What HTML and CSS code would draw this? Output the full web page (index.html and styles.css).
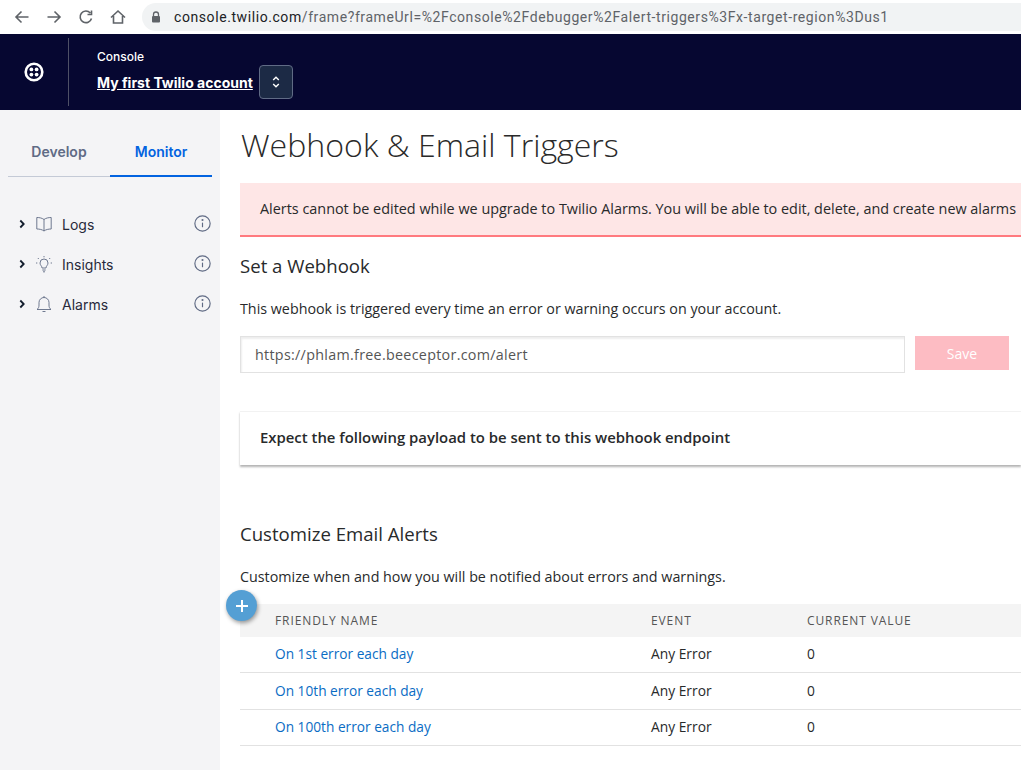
FILE: index.html
```html
<!DOCTYPE html>
<html lang="en">

<head>
    <meta charset="UTF-8">
    <meta name="viewport" content="width=device-width, initial-scale=1.0">
    <title>Webhook &amp; Email Triggers</title>
    <link rel="stylesheet" href="styles.css">
</head>

<body>
    <div class="browser-bar">
        <svg class="nav-icon" viewBox="0 0 16 16"><path d="M14.5 8H2M7.5 2.5 2 8l5.5 5.5" /></svg>
        <svg class="nav-icon" viewBox="0 0 16 16"><path d="M1.5 8H14M8.5 2.5 14 8l-5.500 5.500" /></svg>
        <svg class="nav-icon" viewBox="0 0 16 16"><path d="M13.500 9.500A5.800 5.800 0 1 1 12.300 4M13.500 1.500v4h-4" /></svg>
        <svg class="nav-icon" viewBox="0 0 16 16"><path d="M1 8.500 8 2l7 6.500M3.500 7v7h9V7" /></svg>
        <div class="url-box">
            <svg class="lock" viewBox="0 0 10 12"><path d="M2.500 5V3.500a2.500 2.500 0 0 1 5 0V5" fill="none" stroke="#5f6368" stroke-width="1.300" /><rect x="1" y="5" width="8" height="6.500" rx="1" fill="#5f6368" /></svg>
            <span class="url-host">console.twilio.com</span><span class="url-path">/frame?frameUrl=%2Fconsole%2Fdebugger%2Falert-triggers%3Fx-target-region%3Dus1</span>
        </div>
    </div>

    <header class="top-bar">
        <div class="logo-cell">
            <svg class="logo" viewBox="0 0 20 20">
                <circle cx="10" cy="10" r="8.300" fill="none" stroke="#fff" stroke-width="2.600" />
                <circle cx="7.400" cy="7.400" r="1.900" fill="#fff" />
                <circle cx="12.600" cy="7.400" r="1.900" fill="#fff" />
                <circle cx="7.400" cy="12.600" r="1.900" fill="#fff" />
                <circle cx="12.600" cy="12.600" r="1.900" fill="#fff" />
            </svg>
        </div>
        <div class="account">
            <div class="account-label">Console</div>
            <div class="account-row">
                <a class="account-name" href="#">My first Twilio account</a>
                <button class="account-switch" type="button">
                    <svg viewBox="0 0 8 14"><path d="M1.200 5 4 2.200 6.800 5M1.200 9 4 11.800 6.800 9" /></svg>
                </button>
            </div>
        </div>
    </header>

    <div class="layout">
        <nav class="sidebar">
            <div class="tabs">
                <a class="tab" href="#">Develop</a>
                <a class="tab active" href="#">Monitor</a>
            </div>
            <ul class="menu">
                <li class="menu-item">
                    <svg class="chevron" viewBox="0 0 6 10"><path d="M1.300 1.500 4.700 5 1.300 8.500" /></svg>
                    <svg class="menu-icon" viewBox="0 0 18 18"><path d="M9 4.500C7 3 4.500 2.500 1.800 2.500v11.500c2.700 0 5.200.5 7.200 2 2-1.500 4.500-2 7.200-2V2.500C13.500 2.500 11 3 9 4.500zM9 4.500V16" /></svg>
                    <span class="menu-text">Logs</span>
                    <svg class="info" viewBox="0 0 16 16"><circle cx="8" cy="8" r="7.200" /><path d="M8 7.200v4.300" /><circle class="dot" cx="8" cy="4.700" r="1" /></svg>
                </li>
                <li class="menu-item">
                    <svg class="chevron" viewBox="0 0 6 10"><path d="M1.300 1.500 4.700 5 1.300 8.500" /></svg>
                    <svg class="menu-icon" viewBox="0 0 18 18"><path d="M7 13c0-2-2-2.800-2-5a4 4 0 0 1 8 0c0 2.200-2 3-2 5zM7.300 15h3.400M8 16.800h2M9 1v1.300M2.800 3l1 1M15.200 3l-1 1M1 8h1.300M15.700 8H17" /></svg>
                    <span class="menu-text">Insights</span>
                    <svg class="info" viewBox="0 0 16 16"><circle cx="8" cy="8" r="7.200" /><path d="M8 7.200v4.300" /><circle class="dot" cx="8" cy="4.700" r="1" /></svg>
                </li>
                <li class="menu-item">
                    <svg class="chevron" viewBox="0 0 6 10"><path d="M1.300 1.500 4.700 5 1.300 8.500" /></svg>
                    <svg class="menu-icon" viewBox="0 0 18 18"><path d="M2 14.500h14c-1.500-1-2-2.500-2-4.500V7.500a5 5 0 0 0-10 0V10c0 2-.5 3.500-2 4.500zM7.500 16.500h3M9 1v1.500" /></svg>
                    <span class="menu-text">Alarms</span>
                    <svg class="info" viewBox="0 0 16 16"><circle cx="8" cy="8" r="7.200" /><path d="M8 7.200v4.300" /><circle class="dot" cx="8" cy="4.700" r="1" /></svg>
                </li>
            </ul>
        </nav>

        <main class="content">
            <h1>Webhook &amp; Email Triggers</h1>
            <div class="alert">Alerts cannot be edited while we upgrade to Twilio Alarms. You will be able to edit, delete, and create new alarms</div>

            <h2 class="webhook-title">Set a Webhook</h2>
            <p class="webhook-desc">This webhook is triggered every time an error or warning occurs on your account.</p>
            <form class="webhook-form">
                <input class="webhook-input" type="text" value="https://phlam.free.beeceptor.com/alert">
                <button class="save-btn" type="button">Save</button>
            </form>

            <div class="payload-card">Expect the following payload to be sent to this webhook endpoint</div>

            <h2 class="email-title">Customize Email Alerts</h2>
            <p class="email-desc">Customize when and how you will be notified about errors and warnings.</p>

            <div class="table-wrap">
                <button class="add-btn" type="button">
                    <svg viewBox="0 0 14 14"><path d="M7 1v12M1 7h12" /></svg>
                </button>
                <table class="alerts">
                    <thead>
                        <tr>
                            <th class="col-name">Friendly Name</th>
                            <th class="col-event">Event</th>
                            <th>Current Value</th>
                        </tr>
                    </thead>
                    <tbody>
                        <tr>
                            <td class="col-name"><a href="#">On 1st error each day</a></td>
                            <td>Any Error</td>
                            <td>0</td>
                        </tr>
                        <tr>
                            <td class="col-name"><a href="#">On 10th error each day</a></td>
                            <td>Any Error</td>
                            <td>0</td>
                        </tr>
                        <tr>
                            <td class="col-name"><a href="#">On 100th error each day</a></td>
                            <td>Any Error</td>
                            <td>0</td>
                        </tr>
                    </tbody>
                </table>
            </div>
        </main>
    </div>
</body>

</html>
```

FILE: styles.css
```css
:root {
    --navy: #060731;
    --blue: #0263e0;
    --link-color: #0a6cc4;
    --text-color: #282a2b;
    --sidebar-bg: #f4f4f6;
    --line-color: #e2e2e2;
}

html,
body {
    height: 100%;
}

body {
    margin: 0;
    height: 770px;
    overflow: hidden;
    display: flex;
    flex-direction: column;
    font-family: 'Open Sans', sans-serif;
    color: var(--text-color);
    background-color: #fff;
}

.browser-bar {
    height: 34px;
    flex: none;
    display: flex;
    align-items: center;
    padding-left: 14px;
    gap: 16px;
    background-color: #fff;
    overflow: hidden;
}

.nav-icon {
    width: 16px;
    height: 16px;
    flex: none;
    fill: none;
    stroke: #5f6368;
    stroke-width: 1.600;
}

.url-box {
    flex: none;
    display: flex;
    align-items: center;
    height: 28px;
    width: 900px;
    padding-left: 9px;
    border-radius: 14px;
    background-color: #f1f3f4;
    font-family: 'Roboto', sans-serif;
    font-size: 14px;
    letter-spacing: 0.58px;
    white-space: nowrap;
}

.lock {
    width: 10px;
    height: 12px;
    margin-right: 13px;
}

.url-host {
    color: #202124;
}

.url-path {
    color: #5f6368;
}

.top-bar {
    height: 76px;
    flex: none;
    display: flex;
    align-items: center;
    background-color: var(--navy);
    color: #fff;
    font-family: 'Inter', sans-serif;
}

.logo-cell {
    width: 68px;
    height: 68px;
    display: flex;
    align-items: center;
    justify-content: center;
    border-right: 1px solid #4e5066;
}

.logo {
    width: 20px;
    height: 20px;
}

.account {
    margin-left: 28px;
    padding-top: 4px;
}

.account-label {
    font-size: 12px;
    line-height: 16px;
    font-weight: 500;
}

.account-row {
    display: flex;
    align-items: center;
    gap: 6px;
}

.account-name {
    color: #fff;
    font-size: 14px;
    font-weight: 700;
}

.account-switch {
    width: 34px;
    height: 34px;
    padding: 0;
    display: flex;
    align-items: center;
    justify-content: center;
    background-color: #1c2a45;
    border: 1px solid #606b85;
    border-radius: 4px;
}

.account-switch svg {
    width: 8px;
    height: 14px;
    fill: none;
    stroke: #fff;
    stroke-width: 1.400;
}

.layout {
    flex: 1;
    display: flex;
    min-height: 0;
}

.sidebar {
    width: 220px;
    flex: none;
    background-color: var(--sidebar-bg);
    font-family: 'Inter', sans-serif;
}

.tabs {
    display: flex;
    margin: 15px 8px 0;
    border-bottom: 1px solid #c4cad6;
}

.tab {
    flex: 1;
    height: 50px;
    line-height: 54px;
    text-align: center;
    text-decoration: none;
    font-size: 14px;
    font-weight: 600;
    color: #606b85;
    margin-bottom: -1px;
}

.tab.active {
    color: var(--blue);
    border-bottom: 2px solid var(--blue);
}

.menu {
    list-style: none;
    margin: 27px 0 0;
    padding: 0 9px 0 19px;
}

.menu-item {
    height: 40px;
    display: flex;
    align-items: center;
    font-size: 14px;
    color: #282a3a;
}

.chevron {
    width: 6px;
    height: 10px;
    flex: none;
    fill: none;
    stroke: #121c2d;
    stroke-width: 1.800;
}

.menu-icon {
    width: 18px;
    height: 18px;
    flex: none;
    margin-left: 10px;
    fill: none;
    stroke: #606b85;
    stroke-width: 0.900;
}

.menu-text {
    flex: 1;
    margin-left: 9px;
}

.info {
    width: 17px;
    height: 17px;
    flex: none;
    margin-top: -2px;
    fill: none;
    stroke: #606b85;
    stroke-width: 1.100;
}

.info .dot {
    fill: #606b85;
    stroke: none;
}

.content {
    flex: 1;
    min-width: 0;
    padding-left: 20px;
    overflow: hidden;
}

h1 {
    margin: 13px 0 0 1px;
    font-size: 32.100px;
    line-height: 44px;
    font-weight: 300;
    color: #2a2a2a;
}

.alert {
    margin-top: 16px;
    height: 52px;
    line-height: 51px;
    padding-left: 20px;
    font-size: 14.400px;
    white-space: nowrap;
    overflow: hidden;
    background-color: #fee6e6;
    border-bottom: 2px solid #ff7a7f;
}

h2 {
    margin: 0;
    font-size: 18.600px;
    line-height: 24px;
    font-weight: 400;
}

.webhook-title {
    margin-top: 17px;
}

.webhook-desc {
    margin: 21px 0 0;
    font-size: 14.300px;
    line-height: 20px;
}

.webhook-form {
    margin-top: 17px;
    display: flex;
    align-items: flex-start;
    gap: 10px;
}

.webhook-input {
    width: 665px;
    height: 37px;
    box-sizing: border-box;
    padding: 0 14px;
    border: 1px solid var(--line-color);
    box-shadow: inset 1px 2px 2px rgba(0, 0, 0, 0.07);
    font-family: inherit;
    font-size: 14.300px;
    letter-spacing: 0.3px;
    color: #555;
}

.save-btn {
    width: 94px;
    height: 34px;
    padding: 0;
    border: none;
    background-color: #fdbcc3;
    color: #fff;
    font-family: inherit;
    font-size: 14px;
}

.payload-card {
    margin-top: 38px;
    height: 53px;
    line-height: 50px;
    padding-left: 20px;
    font-size: 14.900px;
    font-weight: 600;
    background-color: #fff;
    border-top: 1px solid #f2f2f2;
    box-shadow: 0 2px 2px rgba(0, 0, 0, 0.3);
}

.email-title {
    margin-top: 57px;
}

.email-desc {
    margin: 21px 0 0;
    font-size: 14.300px;
    line-height: 20px;
}

.table-wrap {
    position: relative;
    margin-top: 17px;
}

.add-btn {
    position: absolute;
    left: -14px;
    top: -14px;
    width: 31px;
    height: 31px;
    padding: 0;
    display: flex;
    align-items: center;
    justify-content: center;
    border: none;
    border-radius: 50%;
    background-color: #549fd4;
    box-shadow: 1px 2px 4px rgba(0, 0, 0, 0.4);
}

.add-btn svg {
    width: 14px;
    height: 14px;
    fill: none;
    stroke: #fff;
    stroke-width: 2;
}

.alerts {
    width: 100%;
    border-collapse: collapse;
    font-size: 13.800px;
}

.alerts th {
    height: 33px;
    padding: 0;
    text-align: left;
    text-transform: uppercase;
    font-size: 12px;
    font-weight: 400;
    letter-spacing: 0.9px;
    color: #555;
    background-color: #f4f4f4;
}

.alerts td {
    height: 33.400px;
    padding: 0 0 2px;
    border-bottom: 1px solid var(--line-color);
}

.alerts .col-name {
    width: 376px;
    padding-left: 35px;
}

.col-event {
    width: 156px;
}

.alerts a {
    color: var(--link-color);
    text-decoration: none;
    font-size: 13.700px;
}
```
